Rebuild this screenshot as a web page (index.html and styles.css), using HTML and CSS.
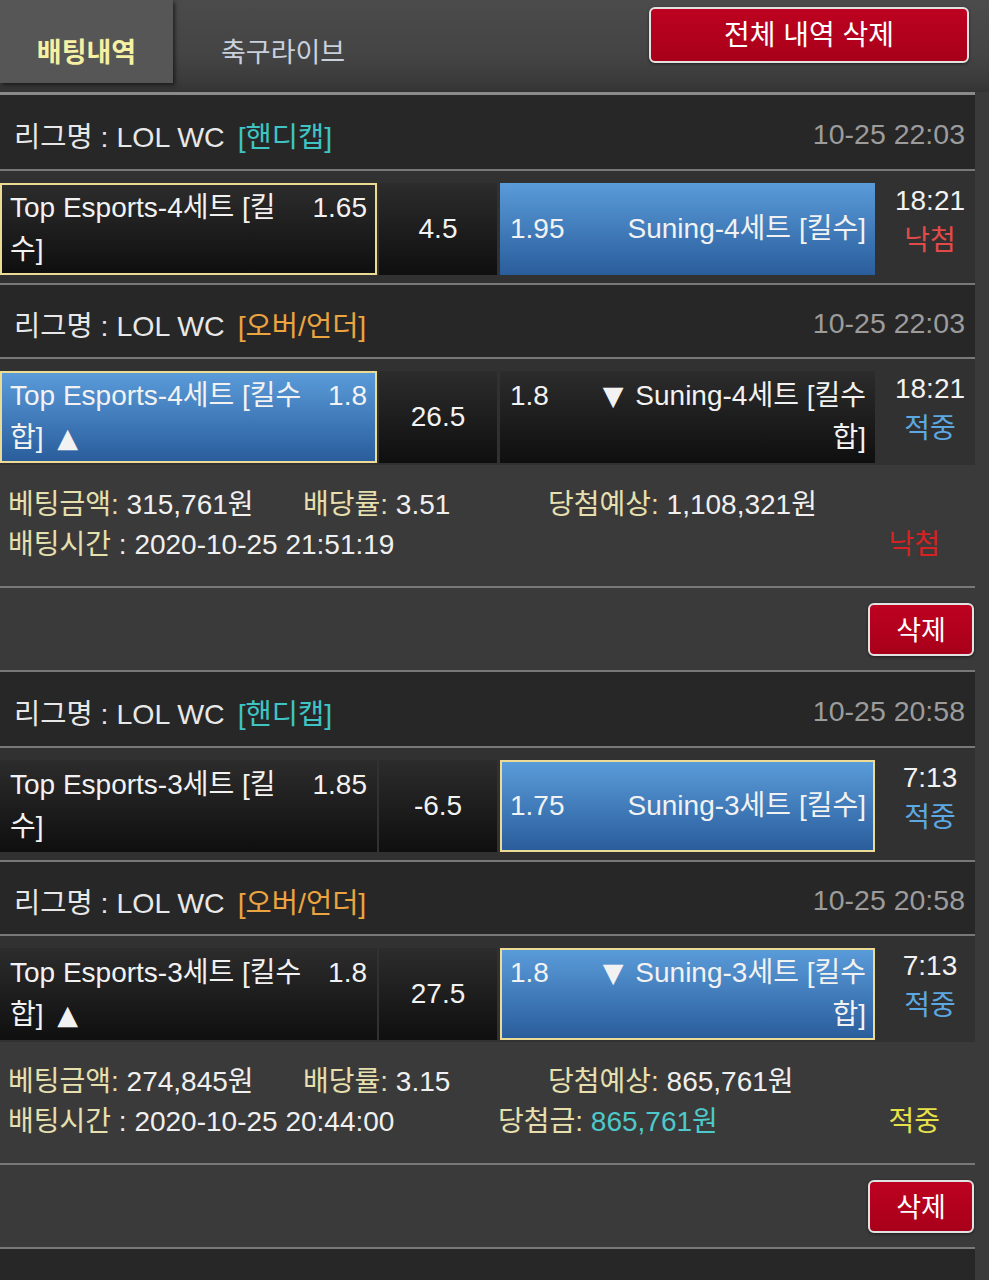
FILE: index.html
```html
<!DOCTYPE html>
<html lang="ko">
<head>
<meta charset="utf-8">
<title>배팅내역</title>
<link rel="stylesheet" href="styles.css">
</head>
<body>
<header class="top">
  <nav class="tabs">
    <a class="tab active">배팅내역</a>
    <a class="tab">축구라이브</a>
  </nav>
  <button class="btn-red btn-all">전체 내역 삭제</button>
</header>

<main class="list">
  <section class="bet">
    <div class="league">
      <span class="lname">리그명 : LOL WC</span><span class="tag handi">[핸디캡]</span>
      <span class="date">10-25 22:03</span>
    </div>
    <div class="match">
      <div class="cell home pick"><div class="txt"><span class="team">Top Esports-4세트 [킬수]</span><span class="odds">1.65</span></div></div>
      <div class="cell mid">4.5</div>
      <div class="cell away win"><div class="txt"><span class="odds">1.95</span><span class="team">Suning-4세트 [킬수]</span></div></div>
      <div class="time"><div>18:21</div><div class="st st-lose">낙첨</div></div>
    </div>
    <div class="league">
      <span class="lname">리그명 : LOL WC</span><span class="tag ou">[오버/언더]</span>
      <span class="date">10-25 22:03</span>
    </div>
    <div class="match last">
      <div class="cell home pick win"><div class="txt"><span class="team">Top Esports-4세트 [킬수합] <span class="tri">▲</span></span><span class="odds">1.8</span></div></div>
      <div class="cell mid">26.5</div>
      <div class="cell away"><div class="txt"><span class="odds">1.8</span><span class="team"><span class="tri tri-d">▼</span> Suning-4세트 [킬수합]</span></div></div>
      <div class="time"><div>18:21</div><div class="st st-win">적중</div></div>
    </div>
    <div class="info">
      <div class="info-row">
        <span class="f f1"><span class="lb">베팅금액:</span> 315,761원</span>
        <span class="f f2"><span class="lb">배당률:</span> 3.51</span>
        <span class="f"><span class="lb">당첨예상:</span> 1,108,321원</span>
      </div>
      <div class="info-row">
        <span class="f f-time"><span class="lb">배팅시간</span> : 2020-10-25 21:51:19</span>
        <span class="result r-lose">낙첨</span>
      </div>
    </div>
    <div class="actions"><button class="btn-red btn-del">삭제</button></div>
  </section>

  <section class="bet">
    <div class="league">
      <span class="lname">리그명 : LOL WC</span><span class="tag handi">[핸디캡]</span>
      <span class="date">10-25 20:58</span>
    </div>
    <div class="match">
      <div class="cell home"><div class="txt"><span class="team">Top Esports-3세트 [킬수]</span><span class="odds">1.85</span></div></div>
      <div class="cell mid">-6.5</div>
      <div class="cell away pick win"><div class="txt"><span class="odds">1.75</span><span class="team">Suning-3세트 [킬수]</span></div></div>
      <div class="time"><div>7:13</div><div class="st st-win">적중</div></div>
    </div>
    <div class="league">
      <span class="lname">리그명 : LOL WC</span><span class="tag ou">[오버/언더]</span>
      <span class="date">10-25 20:58</span>
    </div>
    <div class="match last">
      <div class="cell home"><div class="txt"><span class="team">Top Esports-3세트 [킬수합] <span class="tri">▲</span></span><span class="odds">1.8</span></div></div>
      <div class="cell mid">27.5</div>
      <div class="cell away pick win"><div class="txt"><span class="odds">1.8</span><span class="team"><span class="tri tri-d">▼</span> Suning-3세트 [킬수합]</span></div></div>
      <div class="time"><div>7:13</div><div class="st st-win">적중</div></div>
    </div>
    <div class="info">
      <div class="info-row">
        <span class="f f1"><span class="lb">베팅금액:</span> 274,845원</span>
        <span class="f f2"><span class="lb">배당률:</span> 3.15</span>
        <span class="f"><span class="lb">당첨예상:</span> 865,761원</span>
      </div>
      <div class="info-row">
        <span class="f f-time"><span class="lb">배팅시간</span> : 2020-10-25 20:44:00</span>
        <span class="f"><span class="lb">당첨금:</span> <span class="prize">865,761원</span></span>
        <span class="result r-win">적중</span>
      </div>
    </div>
    <div class="actions"><button class="btn-red btn-del">삭제</button></div>
  </section>

  <section class="bet">
    <div class="league"></div>
  </section>
</main>
</body>
</html>
```

FILE: styles.css
```css
html, body {
  margin: 0;
  padding: 0;
}

body {
  background: #3a3a3a;
  font-family: "Liberation Sans", "Noto Sans CJK KR", sans-serif;
  color: #f0f0f0;
  width: 989px;
  overflow: hidden;
}

/* ---------- header ---------- */
.top {
  height: 92px;
  display: flex;
  justify-content: space-between;
  align-items: flex-start;
  background: linear-gradient(#4b4b4b 0%, #444 60%, #3b3b3b 88%, #333 100%);
}

.tabs {
  display: flex;
  align-items: flex-start;
}

.tab {
  display: block;
  font-size: 27px;
  line-height: 30px;
  color: #c9d0de;
  padding-top: 38px;
  height: 83px;
  box-sizing: border-box;
}

.tab.active {
  width: 173px;
  text-align: center;
  background: #565656;
  color: #f6f1a2;
  font-weight: bold;
  box-shadow: 2px 2px 4px rgba(0, 0, 0, 0.55);
}

.tab + .tab {
  margin-left: 48px;
}

.btn-red {
  font-family: "Liberation Sans", "Noto Sans CJK KR", sans-serif;
  color: #fff;
  background: linear-gradient(#bd0220, #a8001a);
  border: 2px solid #e2e2e2;
  border-radius: 6px;
  box-shadow: 0 1px 3px rgba(0, 0, 0, 0.5);
  cursor: pointer;
  padding: 0;
}

.btn-all {
  width: 320px;
  height: 56px;
  margin-top: 7px;
  margin-right: 20px;
  font-size: 28px;
  padding-bottom: 4px;
}

/* ---------- list ---------- */
.list {
  width: 975px;
  border-top: 3px solid #8a8a8a;
}

.bet + .bet {
  border-top: 2px solid #787878;
}

.league {
  height: 74px;
  box-sizing: border-box;
  padding: 4px 10px 0 14px;
  display: flex;
  align-items: center;
  background: #272727;
  font-size: 28.5px;
  color: #e8e8e8;
}

.tag {
  margin-left: 13px;
}

.handi { color: #3fc4c4; }
.ou { color: #eba43f; }

.date {
  margin-left: auto;
  color: #9c9c9c;
}

.match {
  display: flex;
  align-items: flex-start;
  border-top: 2px solid #787878;
  padding: 12px 0 8px;
  background: #313131;
}

.league + .match + .league {
  border-top: 2px solid #787878;
}

.match.last {
  padding-bottom: 2px;
}

.cell {
  height: 92px;
  box-sizing: border-box;
  display: flex;
  align-items: center;
  background: linear-gradient(#2c2c2c, #0f0f0f);
  font-size: 28px;
  line-height: 42px;
  color: #f2f2f2;
  padding: 0 10px;
}

.home { width: 377px; }

.mid {
  width: 118px;
  margin-left: 2px;
  justify-content: center;
  padding: 0;
}

.away {
  width: 375px;
  margin-left: 3px;
  padding-right: 9px;
}

.win {
  background: linear-gradient(#5a9bd9, #2a5d9c);
}

.pick {
  border: 2px solid #ecdb95;
  padding-left: 8px;
  padding-right: 8px;
}

.away.pick { padding-right: 7px; }

.txt {
  display: flex;
  align-items: flex-start;
  width: 100%;
}

.home .team { flex: 1; }
.home .odds { margin-left: 14px; }

.away .odds { margin-right: 16px; }
.away .team {
  flex: 1;
  max-width: 276px;
  margin-left: auto;
  text-align: right;
}

.tri {
  display: inline-block;
  font-family: "DejaVu Sans", sans-serif;
  font-size: 27px;
  line-height: 28px;
  margin-left: 6px;
}

.tri-d {
  margin-left: 0;
  margin-right: 4px;
}

.time {
  flex: 1;
  padding-left: 10px;
  text-align: center;
  font-size: 28px;
  line-height: 40px;
  color: #f2f2f2;
  margin-top: -2px;
}

.st-lose { color: #e24a4a; }
.st-win { color: #5ca8e2; }

/* ---------- info ---------- */
.info {
  padding: 20px 35px 21px 8px;
  font-size: 28px;
  line-height: 40px;
  color: #f0f0f0;
}

.info-row {
  display: flex;
}

.f1 { width: 295px; }
.f2 { width: 245px; }
.f-time { width: 490px; }

.lb { color: #e7e0ae; }
.prize { color: #4ec9c9; }

.result { margin-left: auto; }
.r-lose { color: #d62222; }
.r-win { color: #e8e24a; }

.actions {
  display: flex;
  justify-content: flex-end;
  border-top: 2px solid #787878;
  padding: 15px 1px 14px 0;
}

.btn-del {
  width: 106px;
  height: 53px;
  font-size: 27px;
  padding-bottom: 3px;
}
```
